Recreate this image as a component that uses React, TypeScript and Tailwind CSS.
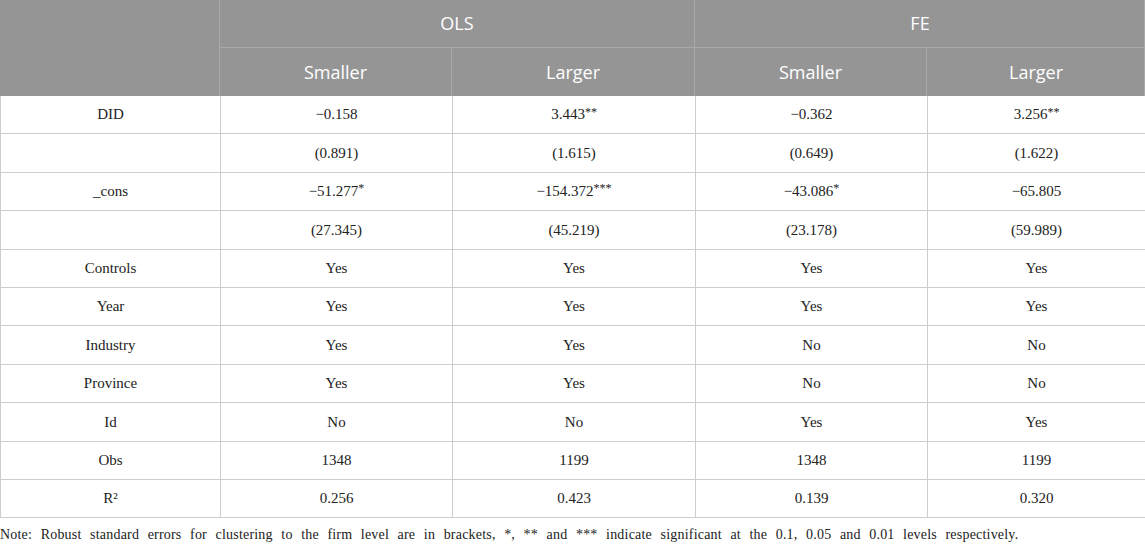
const rows: [string, string, string, string, string][] = [
  ["DID", "−0.158", "3.443**", "−0.362", "3.256**"],
  ["", "(0.891)", "(1.615)", "(0.649)", "(1.622)"],
  ["_cons", "−51.277*", "−154.372***", "−43.086*", "−65.805"],
  ["", "(27.345)", "(45.219)", "(23.178)", "(59.989)"],
  ["Controls", "Yes", "Yes", "Yes", "Yes"],
  ["Year", "Yes", "Yes", "Yes", "Yes"],
  ["Industry", "Yes", "Yes", "No", "No"],
  ["Province", "Yes", "Yes", "No", "No"],
  ["Id", "No", "No", "Yes", "Yes"],
  ["Obs", "1348", "1199", "1348", "1199"],
  ["R²", "0.256", "0.423", "0.139", "0.320"],
];

// split "3.443**" into number and raised stars
const Value = ({ text }: { text: string }) => {
  const m = text.match(/^(.*?)(\*+)$/);
  if (!m) return <>{text}</>;
  return (
    <>
      {m[1]}
      <span className="text-[12px] relative -top-[3px]">{m[2]}</span>
    </>
  );
};

export default function App() {
  const head = "flex items-center justify-center text-white text-[18px] border-[#a9a9a9]";
  const cell = "h-[38.4px] flex items-center justify-center border-b border-r border-[#cdcdcd] text-[15px] text-[#222]";

  return (
    <div className="w-[1145px] h-[544px] bg-white" style={{ fontFamily: "'Liberation Serif', serif" }}>
      <div
        className="grid grid-cols-[220px_232px_243px_232px_218px] grid-rows-[48px_48px] bg-[#959595] border-r border-[#a9a9a9]"
        style={{ fontFamily: "'Open Sans', sans-serif" }}
      >
        <div className={`${head} row-span-2 border-r`} />
        <div className={`${head} col-span-2 border-r border-b`}>OLS</div>
        <div className={`${head} col-span-2 border-b`}>FE</div>
        <div className={`${head} border-r`}>Smaller</div>
        <div className={`${head} border-r`}>Larger</div>
        <div className={`${head} border-r`}>Smaller</div>
        <div className={head}>Larger</div>
      </div>
      <div className="grid grid-cols-[220px_232px_243px_232px_218px] border-l border-[#cdcdcd]">
        {rows.map((r, i) =>
          r.map((c, j) => (
            <div key={`${i}-${j}`} className={cell}>
              <Value text={c} />
            </div>
          ))
        )}
      </div>
      <p className="mt-[6px] text-[14px] text-[#222] tracking-[0.2px] [word-spacing:4.85px] whitespace-nowrap">
        Note: Robust standard errors for clustering to the firm level are in brackets, *, ** and *** indicate significant at the 0.1, 0.05 and 0.01 levels respectively.
      </p>
    </div>
  );
}
